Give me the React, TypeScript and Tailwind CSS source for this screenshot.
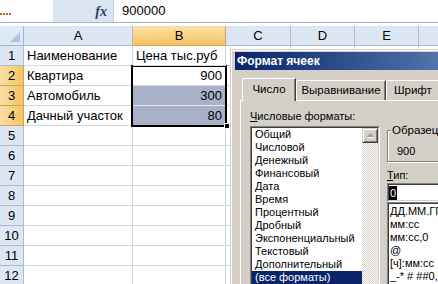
import React from "react";

const SANS = "font-['Liberation_Sans',Arial,sans-serif]";

const colLetters = ["A", "B", "C", "D", "E", "F"];
const rows: [string, string][] = [
  ["Наименование", "Цена тыс.руб"],
  ["Квартира", "900"],
  ["Автомобиль", "300"],
  ["Дачный участок", "80"],
  ["", ""],
  ["", ""],
  ["", ""],
  ["", ""],
  ["", ""],
  ["", ""],
  ["", ""],
  ["", ""],
];

const formats = [
  "Общий",
  "Числовой",
  "Денежный",
  "Финансовый",
  "Дата",
  "Время",
  "Процентный",
  "Дробный",
  "Экспоненциальный",
  "Текстовый",
  "Дополнительный",
  "(все форматы)",
];

const types = ["ДД.ММ.ГГ ч:мм", "мм:сс", "мм:сс,0", "@", "[ч]:мм:сс", "_-* # ##0,00_р_._-"];

function Sheet() {
  return (
    <div className="relative">
      <div className="grid grid-cols-[24px_109px_93px_65px_64px_64px_64px] auto-rows-[20px] text-[13px] text-black">
        {/* corner */}
        <div className="relative bg-[#dfe8f5] border-r border-b border-[#9eb6ce]">
          <svg className="absolute right-[3px] bottom-[3px]" width="10" height="10" viewBox="0 0 10 10">
            <polygon points="10,0 10,10 0,10" fill="#b4c4da" />
          </svg>
        </div>
        {colLetters.map((c) =>
          c === "B" ? (
            <div
              key={c}
              className="flex items-center justify-center bg-gradient-to-b from-[#fbe0a4] to-[#f4c463] border-r border-b border-r-[#c9a656] border-b-[#e2a33c]"
            >
              {c}
            </div>
          ) : (
            <div
              key={c}
              className="flex items-center justify-center bg-[#dde7f4] border-r border-b border-[#a7bcd5]"
            >
              {c}
            </div>
          )
        )}
        {rows.map((r, i) => {
          const sel = i >= 1 && i <= 3;
          const shade = i === 2 || i === 3;
          return (
            <React.Fragment key={i}>
              <div
                className={
                  sel
                    ? "flex items-center justify-center bg-gradient-to-r from-[#fbe0a4] to-[#f4c463] border-r border-b border-r-[#e2a33c] border-b-[#c9a656]"
                    : "flex items-center justify-center bg-[#dde7f4] border-r border-b border-[#a7bcd5]"
                }
              >
                {i + 1}
              </div>
              <div className="flex items-center pl-[3px] whitespace-nowrap border-r border-b border-[#d0d7e5]">
                {r[0]}
              </div>
              <div
                className={
                  (i === 0
                    ? "flex items-center pl-[3px] whitespace-nowrap overflow-visible z-10"
                    : "flex items-center justify-end pr-[3px]") +
                  " border-r border-b " +
                  (shade ? "bg-[#a9b1c9] border-[#d0d7e5] border-b-[#e4e7ef]" : "border-[#d0d7e5]")
                }
              >
                {r[1]}
              </div>
              <div className="border-r border-b border-[#d0d7e5]" />
              <div className="border-r border-b border-[#d0d7e5]" />
              <div className="border-r border-b border-[#d0d7e5]" />
              <div className="border-r border-b border-[#d0d7e5]" />
            </React.Fragment>
          );
        })}
      </div>
      {/* selection */}
      <div className="absolute left-[131px] top-[39px] w-[96px] h-[62px] border-2 border-black" />
      <div className="absolute left-[224px] top-[97px] w-[6px] h-[6px] bg-black border border-white" />
    </div>
  );
}

function Sunken({ className, children }: { className?: string; children?: React.ReactNode }) {
  return (
    <div className={"border-t border-l border-[#808080] border-b border-r border-b-white border-r-white " + (className ?? "")}>
      <div className="h-full border-t border-l border-[#404040] border-b border-r border-b-[#d4d0c8] border-r-[#d4d0c8] bg-white overflow-hidden">
        {children}
      </div>
    </div>
  );
}

function Dialog() {
  return (
    <div className={"absolute left-[230px] top-[49px] w-[420px] h-[260px] bg-[#d4d0c8] border-t border-l border-[#d4d0c8] text-[11px] text-black " + SANS}>
      <div className="h-full border-t border-l border-white pl-[3px] pt-[1px]">
        <div className="h-[18px] bg-gradient-to-r from-[#0a246a] to-[#a6caf0] text-white font-bold text-[12px] leading-[18px] pl-[2px]">
          Формат ячеек
        </div>
        <div className="pl-[5px] pt-[8px]">
          <div className="flex items-end h-[22px] pl-[2px]">
            <div className="relative z-10 mb-[-1px] w-[54px] h-[23px] bg-[#d4d0c8] border-t border-l border-white border-r border-r-[#404040] rounded-tl-[2px] shadow-[inset_-1px_0_0_#808080] flex items-center justify-center pb-[1px] text-[11.5px]">
              Число
            </div>
            <div className="w-[90px] h-[20px] bg-[#d4d0c8] border-t border-l border-white border-r border-r-[#404040] rounded-tl-[2px] shadow-[inset_-1px_0_0_#808080] flex items-center justify-center text-[11.5px]">
              Выравнивание
            </div>
            <div className="w-[70px] h-[20px] bg-[#d4d0c8] border-t border-l border-white border-r border-r-[#404040] rounded-tl-[2px] flex items-center pl-[7px] text-[11.5px]">
              Шрифт
            </div>
          </div>
          <div className="h-[200px] border-t border-l border-white pl-[9px] pt-[9px] flex">
            <div className="w-[130px] flex flex-col">
              <div className="leading-[13px] h-[13px] mb-[3px] whitespace-nowrap">
                <span className="underline">Ч</span>исловые форматы:
              </div>
              <Sunken className="h-[170px]">
                <div className="flex h-full">
                  <div className="flex-1 flex flex-col">
                    {formats.map((f, i) => (
                      <div
                        key={f}
                        className={
                          "leading-[13px] h-[13px] pl-[3px] whitespace-nowrap " +
                          (i === formats.length - 1 ? "bg-[#0a246a] text-white" : "")
                        }
                      >
                        {f}
                      </div>
                    ))}
                  </div>
                  <div className="w-[16px] h-full bg-[image:repeating-conic-gradient(#ffffff_0_25%,#d4d0c8_0_50%)] [background-size:2px_2px]">
                    <div className="w-[16px] h-[15px] bg-[#d4d0c8] border-t border-l border-[#d4d0c8] border-r border-b border-r-[#404040] border-b-[#404040] shadow-[inset_1px_1px_0_#fff,inset_-1px_-1px_0_#808080] flex items-center justify-center">
                      <svg width="7" height="5" viewBox="0 0 7 5">
                        <polygon points="3.5,0 7,4 0,4" fill="#a0a0a0" />
                        <line x1="1" y1="4.5" x2="7" y2="4.5" stroke="#fff" strokeWidth="1" />
                      </svg>
                    </div>
                  </div>
                </div>
              </Sunken>
            </div>
            <div className="ml-[7px] w-[120px] flex flex-col">
              <div className="relative mt-[20px] h-[33px] border border-[#808080] shadow-[inset_1px_1px_0_#fff,1px_1px_0_#fff]">
                <div className="absolute left-[3px] top-[-7px] bg-[#d4d0c8] px-[1px] leading-[13px] text-[11.5px]">Образец</div>
                <div className="pt-[14px] pl-[9px] leading-[13px]">900</div>
              </div>
              <div className="mt-[7px] leading-[13px] h-[13px]">
                <span className="underline">Т</span>ип:
              </div>
              <Sunken className="mt-[1px] h-[19px]">
                <div className="flex items-center h-full">
                  <span className="bg-black text-white px-[1px] leading-[14px]">0</span>
                </div>
              </Sunken>
              <Sunken className="h-[100px]">
                <div className="pt-[1px] flex flex-col">
                  {types.map((t) => (
                    <div key={t} className="leading-[13px] h-[13px] pl-[1px] whitespace-nowrap">
                      {t}
                    </div>
                  ))}
                </div>
              </Sunken>
            </div>
          </div>
        </div>
      </div>
    </div>
  );
}

export default function App() {
  return (
    <div className={"relative w-[438px] h-[284px] overflow-hidden bg-white " + SANS}>
      <div className="flex h-[23px] border-b border-[#9eb6ce]">
        <div className="w-[53px] bg-white flex items-center gap-[1px] pt-[5px]">
          <span className="w-[2px] h-[2px] bg-[#b06a2a]" />
          <span className="w-[2px] h-[2px] bg-[#b06a2a]" />
          <span className="w-[2px] h-[2px] bg-[#b06a2a]" />
          <span className="w-[2px] h-[2px] bg-[#b06a2a]" />
        </div>
        <div className="w-[60px] bg-[#dbe5f1] flex items-center justify-end pr-[6px]">
          <span className="font-['Liberation_Serif',serif] italic font-bold text-[14px] text-[#2f3f5c]">fx</span>
        </div>
        <div className="flex-1 bg-white border-l border-[#c5d3e5] pl-[8px] text-[13px] leading-[22px] text-black">900000</div>
      </div>
      <div className="h-[3px] bg-white" />
      <Sheet />
      <Dialog />
    </div>
  );
}
